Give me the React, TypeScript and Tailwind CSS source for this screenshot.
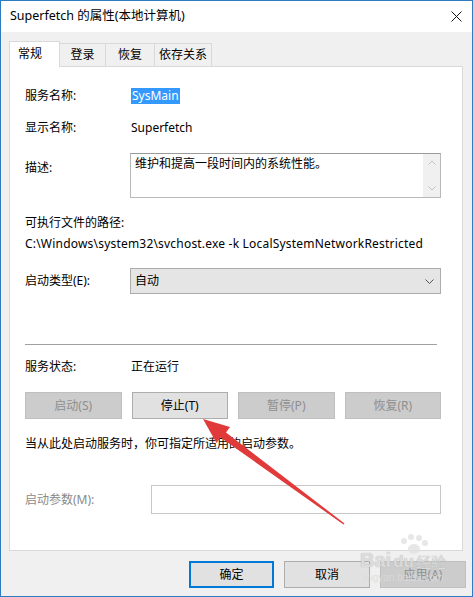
import React from "react";

const font = { fontFamily: "'Noto Sans', 'Noto Sans CJK SC', sans-serif" };

function Btn({ children, disabled, def }: { children: React.ReactNode; disabled?: boolean; def?: boolean }) {
  const cls = disabled
    ? "bg-[#cccccc] border border-[#bfbfbf] text-[#8f8f8f]"
    : def
    ? "bg-[#e1e1e1] border-2 border-[#0078d7] text-black"
    : "bg-[#e1e1e1] border border-[#adadad] text-black";
  return <div className={`flex items-center justify-center h-[27px] text-[12px] ${cls}`}>{children}</div>;
}

export default function App() {
  return (
    <div className="relative w-[473px] h-[597px] bg-[#f0f0f0] border border-[#2f7bbf] overflow-hidden text-[12px] text-black leading-none" style={font}>
      {/* title bar */}
      <div className="h-[31px] bg-white flex items-center justify-between pl-[9px] pr-[10px]">
        <span className="text-[12.5px]">Superfetch 的属性(本地计算机)</span>
        <svg width="11" height="11" viewBox="0 0 11 11">
          <path d="M0.5 0.5 L10.5 10.5 M10.5 0.5 L0.5 10.5" stroke="#111" strokeWidth="1" />
        </svg>
      </div>
      {/* tabs */}
      <div className="ml-[8px] mt-[8px] flex items-end h-[26px]">
        <div className="h-[26px] w-[51px] bg-white border border-b-0 border-[#d9d9d9] flex items-center pl-[8px] relative z-10 -mb-px pb-[1px]">常规</div>
        <div className="h-[23px] w-[46px] border border-l-0 border-b-0 border-[#d9d9d9] flex items-center justify-center">登录</div>
        <div className="h-[23px] w-[49px] border border-l-0 border-b-0 border-[#d9d9d9] flex items-center justify-center">恢复</div>
        <div className="h-[23px] w-[57px] border border-l-0 border-b-0 border-[#d9d9d9] flex items-center justify-center">依存关系</div>
      </div>
      {/* panel */}
      <div className="ml-[8px] w-[454px] h-[485px] bg-white border border-[#d9d9d9] pl-[15px] pt-[21px] flex flex-col">
        <div className="flex items-center h-[16px]">
          <div className="w-[105px]">服务名称:</div>
          <div className="ml-[1px] h-[16px] px-[1px] bg-[#3399ff] text-white flex items-center">SysMain</div>
        </div>
        <div className="flex items-center h-[16px] mt-[16px]">
          <div className="w-[106px]">显示名称:</div>
          <div>Superfetch</div>
        </div>
        <div className="flex items-start mt-[17px]">
          <div className="w-[105px] pt-[9px]">描述:</div>
          <div className="w-[311px] h-[45px] border border-[#b9b9b9] border-t-[#9a9a9a] flex">
            <div className="flex-1 pl-[4px] pt-[4px]">维护和提高一段时间内的系统性能。</div>
            <div className="w-[17px] bg-[#f0f0f0] flex flex-col items-center justify-between py-[6px]">
              <svg width="8" height="5" viewBox="0 0 8 5"><path d="M0.5 4.5 L4 1 L7.5 4.5" fill="none" stroke="#c2c2c2" /></svg>
              <svg width="8" height="5" viewBox="0 0 8 5"><path d="M0.5 0.5 L4 4 L7.5 0.5" fill="none" stroke="#c2c2c2" /></svg>
            </div>
          </div>
        </div>
        <div className="h-[16px] flex items-center mt-[17px]">可执行文件的路径:</div>
        <div className="h-[16px] flex items-center mt-[5px] tracking-[0.2px]">C:\Windows\system32\svchost.exe -k LocalSystemNetworkRestricted</div>
        <div className="flex items-center mt-[16px]">
          <div className="w-[105px]">启动类型(E):</div>
          <div className="w-[311px] h-[26px] bg-[#e5e5e5] border border-[#acacac] flex items-center justify-between pl-[4px] pr-[6px]">
            <span>自动</span>
            <svg width="9" height="5" viewBox="0 0 9 5"><path d="M0.5 0.5 L4.5 4.5 L8.5 0.5" fill="none" stroke="#555" /></svg>
          </div>
        </div>
        <div className="mt-[50px] w-[412px] h-px bg-[#a0a0a0]" />
        <div className="flex items-center h-[16px] mt-[14px]">
          <div className="w-[106px]">服务状态:</div>
          <div>正在运行</div>
        </div>
        <div className="mt-[17px] w-[416px] grid grid-cols-4 gap-[10px]">
          <Btn disabled>启动(S)</Btn>
          <Btn>停止(T)</Btn>
          <Btn disabled>暂停(P)</Btn>
          <Btn disabled>恢复(R)</Btn>
        </div>
        <div className="h-[16px] flex items-center mt-[17px]">当从此处启动服务时，你可指定所适用的启动参数。</div>
        <div className="flex items-center mt-[33px]">
          <div className="w-[126px] text-[#8a8a8a]">启动参数(M):</div>
          <div className="w-[290px] h-[29px] border border-[#c8c8c8] bg-white" />
        </div>
      </div>
      {/* bottom buttons */}
      <div className="mt-[10px] flex justify-end gap-[10px] pr-[6px]">
        <div className="w-[85px]"><Btn def>确定</Btn></div>
        <div className="w-[86px]"><Btn>取消</Btn></div>
        <div className="w-[86px]"><Btn disabled>应用(A)</Btn></div>
      </div>
      {/* red arrow overlay */}
      <svg className="absolute left-0 top-0 pointer-events-none" width="473" height="597" viewBox="0 0 473 597">
        <polygon
          points="202,418 229,426 225,431.5 343.5,522.5 342.5,523.5 219.5,436.5 215.5,442"
          fill="#e03a3a"
        />
        {/* watermark paw */}
        <g fill="#e2e2e2" opacity="0.8">
          <circle cx="403" cy="540" r="3" />
          <circle cx="410" cy="536" r="3" />
          <circle cx="418" cy="537" r="3" />
          <circle cx="424" cy="542" r="3" />
          <ellipse cx="413" cy="548" rx="6" ry="5" />
        </g>
      </svg>
      {/* watermark */}
      <div className="absolute left-[356px] top-[549px] w-[92px] pointer-events-none flex flex-col items-center text-[#dcdcdc]" style={{ fontFamily: "'Liberation Sans', 'Noto Sans CJK SC', sans-serif" }}>
        <div className="flex items-end gap-[2px] leading-none opacity-90" style={{ textShadow: "0 0 1px #aaa" }}>
          <span className="text-[20px] font-bold">Bai</span>
          <span className="text-[17px] font-bold">du</span>
          <span className="text-[15px]">经验</span>
        </div>
        <div className="text-[10px] mt-[3px] opacity-80">jingyan.baidu.com</div>
      </div>
    </div>
  );
}
